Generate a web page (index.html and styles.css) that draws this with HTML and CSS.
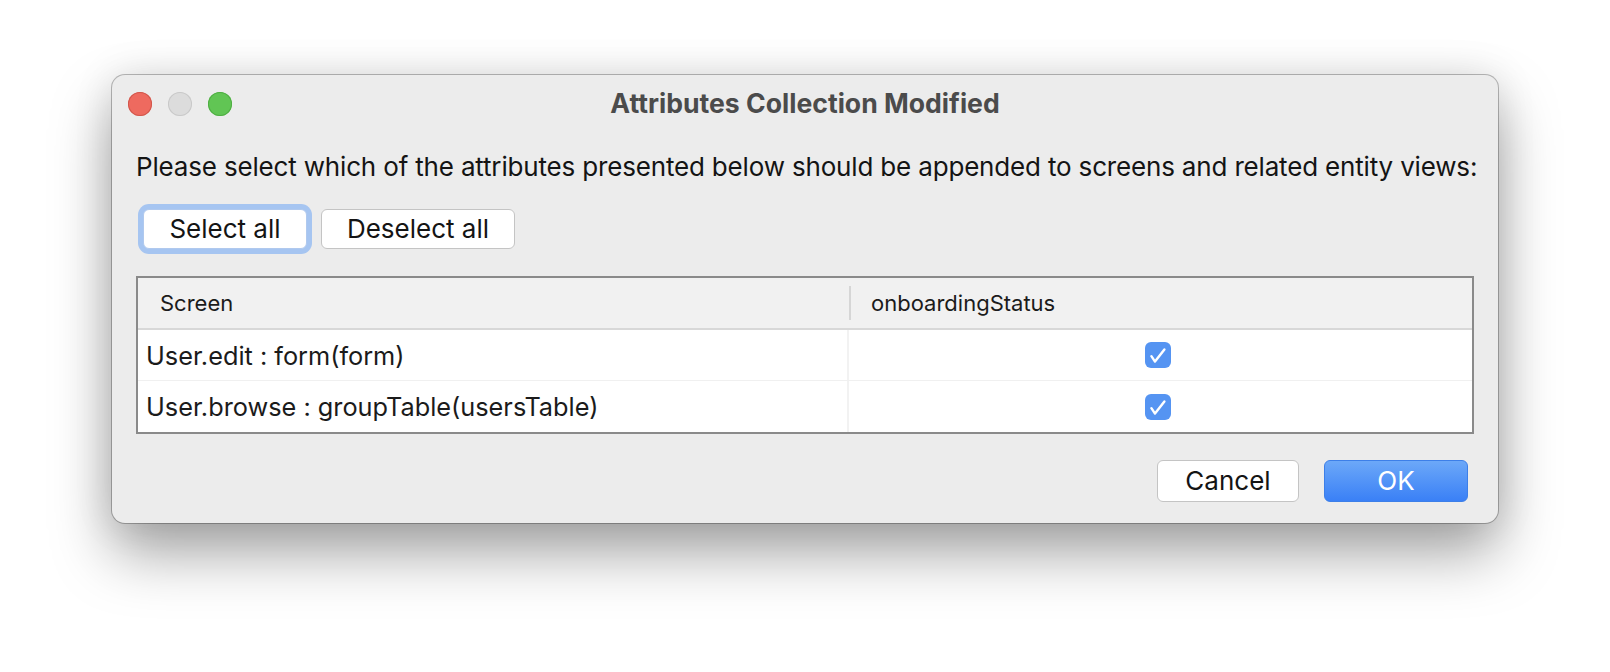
FILE: index.html
```html
<!DOCTYPE html>
<html lang="en">
<head>
<meta charset="utf-8">
<title>Attributes Collection Modified</title>
<link rel="stylesheet" href="styles.css">
</head>
<body>
<div class="stage">
  <div class="window">
    <div class="titlebar">
      <div class="lights">
        <span class="light light-red"></span>
        <span class="light light-gray"></span>
        <span class="light light-green"></span>
      </div>
      <div class="title">Attributes Collection Modified</div>
      <div class="titlebar-spacer"></div>
    </div>
    <div class="content">
      <p class="message">Please select which of the attributes presented below should be appended to screens and related entity views:</p>
      <div class="toolbar">
        <button class="btn btn-select focused">Select all</button>
        <button class="btn btn-deselect">Deselect all</button>
      </div>
      <div class="table">
        <div class="thead">
          <div class="th th-screen">Screen</div>
          <div class="th-divider"></div>
          <div class="th th-attr">onboardingStatus</div>
        </div>
        <div class="row">
          <div class="cell cell-screen">User.edit : form(form)</div>
          <div class="cell cell-attr">
            <span class="check"><svg width="26" height="26" viewBox="0 0 26 26"><path d="M6.4 14.2 L10 19.6 L19.4 7.4" fill="none" stroke="#ffffff" stroke-width="2.4" stroke-linecap="round" stroke-linejoin="round"/></svg></span>
          </div>
        </div>
        <div class="row row-last">
          <div class="cell cell-screen">User.browse : groupTable(usersTable)</div>
          <div class="cell cell-attr">
            <span class="check"><svg width="26" height="26" viewBox="0 0 26 26"><path d="M6.4 14.2 L10 19.6 L19.4 7.4" fill="none" stroke="#ffffff" stroke-width="2.4" stroke-linecap="round" stroke-linejoin="round"/></svg></span>
          </div>
        </div>
      </div>
    </div>
    <div class="footer">
      <button class="btn btn-cancel">Cancel</button>
      <button class="btn btn-ok">OK</button>
    </div>
  </div>
</div>
</body>
</html>
```

FILE: styles.css
```css
* { box-sizing: border-box; }

html, body {
  margin: 0;
  padding: 0;
  background: #ffffff;
}

body {
  font-family: "Inter", "Liberation Sans", "DejaVu Sans", sans-serif;
  color: #1b1b1b;
  width: 1610px;
  height: 672px;
  overflow: hidden;
}

.stage {
  padding: 75px 0 0 112px;
}

.window {
  width: 1386px;
  height: 448px;
  background: #ececec;
  border-radius: 13px;
  box-shadow:
    0 0 0 1px rgba(0, 0, 0, 0.26),
    0 30px 60px rgba(0, 0, 0, 0.36),
    0 0 40px rgba(0, 0, 0, 0.10);
  display: flex;
  flex-direction: column;
}

.window > * { flex-shrink: 0; }

.titlebar {
  height: 58px;
  display: grid;
  grid-template-columns: 1fr auto 1fr;
  align-items: center;
  padding: 0 16px;
}

.lights {
  display: flex;
  gap: 16px;
}

.light {
  width: 24px;
  height: 24px;
  border-radius: 50%;
  display: block;
}

.light-red { background: #ee6a5f; box-shadow: inset 0 0 0 1px #d1574c; }
.light-gray { background: #dcdcdc; box-shadow: inset 0 0 0 1px #c9c9c9; }
.light-green { background: #61c554; box-shadow: inset 0 0 0 1px #4fae43; }

.title {
  font-size: 26.6px;
  font-weight: 700;
  color: #4b4b4b;
  line-height: 32px;
  margin-top: -2px;
}

.content {
  padding: 0 24px;
}

.message {
  margin: 18px 0 0 0;
  font-size: 26px;
  letter-spacing: -0.17px;
  line-height: 32px;
  color: #141414;
  white-space: nowrap;
}

.toolbar {
  display: flex;
  gap: 14px;
  margin-top: 26px;
  padding-left: 7px;
}

.btn {
  font-family: inherit;
  font-size: 26px;
  color: #141414;
  background: #ffffff;
  border: 1px solid #c4c4c4;
  border-radius: 6px;
  height: 40px;
  padding: 0;
  line-height: 38px;
  margin: 0;
}

.btn-select { width: 164px; }
.btn-deselect { width: 194px; }

.focused {
  border-color: #b0c9ee;
  box-shadow: 0 0 0 5px #a6c5f1;
}

.table {
  margin-top: 27px;
  border: 2px solid #8a8a8a;
  background: #f4f4f4;
}

.thead {
  display: flex;
  align-items: center;
  height: 52px;
  background: #f1f1f1;
  border-bottom: 2px solid #d8d8d8;
}

.th {
  font-size: 22px;
  color: #1b1b1b;
}

.th-screen {
  width: 711px;
  padding-left: 22px;
}

.th-divider {
  width: 2px;
  height: 34px;
  background: #d6d6d6;
}

.th-attr {
  flex: 1;
  padding-left: 20px;
}

.row {
  display: flex;
  height: 51px;
  background: #ffffff;
  border-bottom: 1px solid #f0f0f0;
}

.row-last {
  border-bottom: none;
}

.cell {
  display: flex;
  align-items: center;
}

.cell-screen {
  width: 711px;
  padding-left: 8px;
  font-size: 25.3px;
  border-right: 2px solid #f2f2f2;
}

.cell-attr {
  flex: 1;
  justify-content: center;
  padding-right: 6px;
}

.check {
  width: 26px;
  height: 26px;
  border-radius: 6px;
  background: #5594f2;
  display: block;
}

.check svg { display: block; }

.footer {
  display: flex;
  justify-content: flex-end;
  gap: 25px;
  padding: 26px 30px 0 0;
}

.btn-cancel {
  width: 142px;
  height: 42px;
  line-height: 40px;
}

.btn-ok {
  width: 144px;
  height: 42px;
  line-height: 40px;
  color: #ffffff;
  border: 1px solid #3d7fe8;
  background: linear-gradient(#6ca8f8, #3a80f6);
}
```
